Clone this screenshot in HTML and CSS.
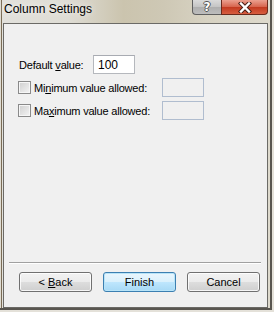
FILE: index.html
```html
<!doctype html>
<html>
<head>
	<meta charset="utf-8">
	<title>Column Settings</title>
	<link rel="stylesheet" href="styles.css">
</head>

<body>
	<div class="window">
		<div class="titlebar">
			<span class="title">Column Settings</span>
			<div class="caption-buttons">
				<div class="cap help">?</div>
				<div class="cap close">
					<svg width="14" height="11" viewBox="0 0 14 11">
						<path d="M3 1.5 L11 9.5 M11 1.5 L3 9.5" stroke="#4a2018" stroke-width="4.4" stroke-linecap="square"/>
						<path d="M3 1.5 L11 9.5 M11 1.5 L3 9.5" stroke="#fff" stroke-width="2.4" stroke-linecap="square"/>
					</svg>
				</div>
			</div>
		</div>

		<div class="client">
			<div class="fields">
				<div class="row">
					<label class="label first">Default <u>v</u>alue:</label>
					<div class="textbox">100</div>
				</div>
				<div class="row">
					<span class="checkbox"></span>
					<label class="label check">Mi<u>n</u>imum value allowed:</label>
					<div class="textbox disabled"></div>
				</div>
				<div class="row">
					<span class="checkbox"></span>
					<label class="label check">Ma<u>x</u>imum value allowed:</label>
					<div class="textbox disabled"></div>
				</div>
			</div>

			<div class="footer">
				<div class="separator"></div>
				<div class="buttons">
					<button class="btn">&lt; <u>B</u>ack</button>
					<button class="btn default">Finish</button>
					<button class="btn">Cancel</button>
				</div>
			</div>
		</div>
	</div>
</body>
</html>
```

FILE: styles.css
```css
html, body{
	margin: 0;
	padding: 0;
	background: #e6e3dc;
	font-family: "Liberation Sans", Arial, sans-serif;
}
.window{
	width: 274px;
	height: 312px;
	box-sizing: border-box;
	padding: 0 6px 4px 3px;
	display: flex;
	flex-direction: column;
	background: linear-gradient(90deg, #e2e1dc 0, #dedcd4 25%, #cbc4ae 45%, #cec8b5 60%, #d7d2c2 75%, #dedacd 100%);
	box-shadow: inset -2px -2px 0 #e4e1d9, inset -4px -4px 0 #595650, inset 1px 0 0 #e0ddd4, inset 2px 0 0 #7a6c55;
}

/* title bar */
.titlebar{
	height: 23px;
	display: flex;
	justify-content: space-between;
	align-items: flex-start;
}
.title{
	font-size: 12px;
	line-height: 15px;
	padding: 2px 0 0 1px;
	color: #000;
	text-shadow: 0 0 6px rgba(255,255,255,0.9);
}
.caption-buttons{
	display: flex;
}
.cap{
	height: 15px;
	box-sizing: border-box;
	border: 1px solid #5f5f5f;
	border-top: none;
	display: flex;
	align-items: center;
	justify-content: center;
}
.help{
	width: 29px;
	border-right: none;
	border-bottom-left-radius: 4px;
	background: linear-gradient(#dadada, #c4c4c4 50%, #aeaeae 51%, #bdbdbd);
	font-family: "DejaVu Sans", sans-serif;
	font-weight: bold;
	font-size: 12px;
	color: #fff;
	text-shadow: 1px 0 0 #555, -1px 0 0 #555, 0 1px 0 #555, 0 -1px 0 #555;
}
.close{
	width: 47px;
	border-color: #6a2a1c;
	border-bottom-right-radius: 4px;
	background: linear-gradient(#eba08f, #d6634c 50%, #c2391f 51%, #d75e40);
}
.close svg{
	display: block;
}

/* client area */
.client{
	flex: 1;
	display: flex;
	flex-direction: column;
	background: #f0f0f0;
	border: 1px solid #6b6a66;
	font-size: 11px;
	letter-spacing: -0.2px;
	color: #000;
}
.fields{
	flex: 1;
	padding: 31px 0 0 15px;
	display: flex;
	flex-direction: column;
	gap: 4px;
}
.row{
	display: flex;
	align-items: center;
	height: 19px;
}
.label u{
	text-decoration-thickness: 1px;
}
.label.first{
	width: 74px;
}
.label.check{
	width: 128px;
	margin-left: 3px;
}
.checkbox{
	width: 13px;
	height: 13px;
	box-sizing: border-box;
	border: 1px solid #8a8a8a;
	background: linear-gradient(135deg, #cfcfcf, #f4f4f4);
	box-shadow: inset 0 0 0 1px #f6f6f6;
	margin-left: -1px;
	margin-top: -1px;
}
.textbox{
	width: 42px;
	height: 19px;
	box-sizing: border-box;
	border: 1px solid #b5b8bd;
	border-top-color: #a8abb2;
	background: #fff;
	padding: 2px 0 0 4px;
	line-height: 14px;
	font-size: 12px;
	letter-spacing: 0;
}
.textbox.disabled{
	background: #f0f0f0;
	border-color: #b0bdcf;
}

/* footer */
.footer{
	padding: 0 6px 15px 5px;
}
.separator{
	height: 1px;
	background: #a0a0a0;
	border-bottom: 1px solid #fff;
	margin-bottom: 8px;
}
.buttons{
	display: flex;
	gap: 11px;
	padding-left: 10px;
}
.btn{
	width: 73px;
	height: 20px;
	box-sizing: border-box;
	border: 1px solid #707070;
	border-radius: 3px;
	background: linear-gradient(#f2f2f2, #ebebeb 50%, #dddddd 51%, #cfcfcf);
	box-shadow: inset 0 0 0 1px rgba(255,255,255,0.8);
	font-family: "Liberation Sans", Arial, sans-serif;
	font-size: 11px;
	color: #000;
	padding: 0;
}
.btn.default{
	border-color: #3c7fb1;
	background: linear-gradient(#eaf6fd, #d9f0fc 50%, #bee6fd 51%, #a7d9f5);
	box-shadow: inset 0 0 0 1px #b8e4f8;
}
```
